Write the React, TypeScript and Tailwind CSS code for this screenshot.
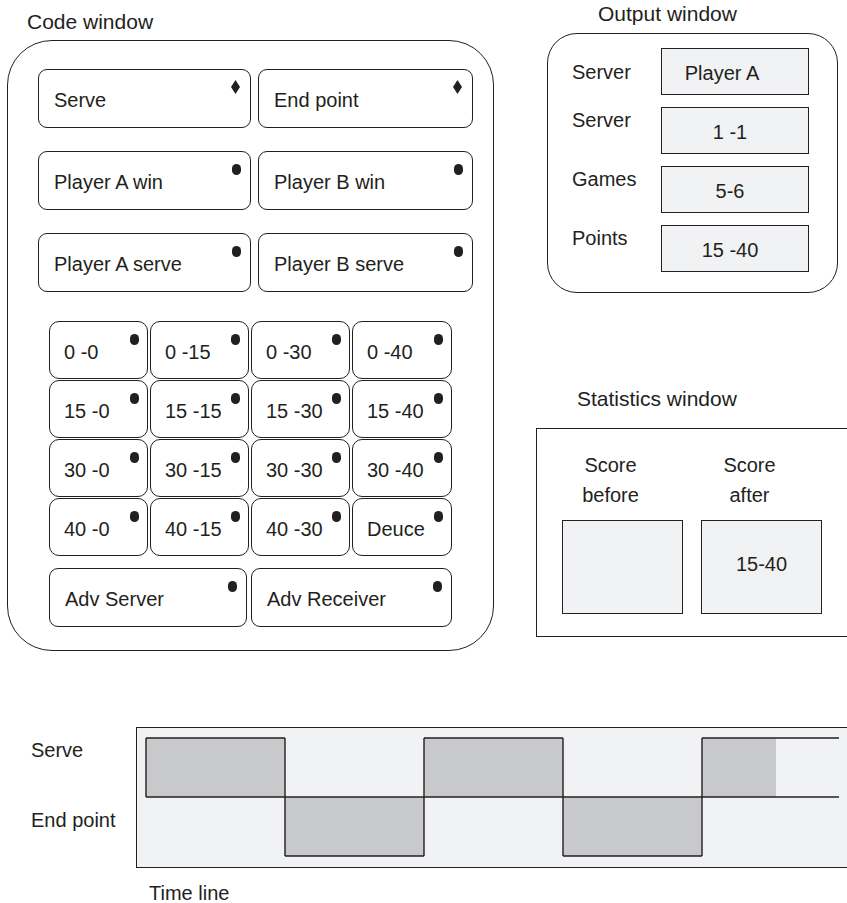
import React from "react"

const ink = "text-[#231f20]"

function Marker({ kind }: { kind: "diamond" | "dot" }) {
  if (kind === "diamond") {
    return (
      <svg className="absolute top-[10px] right-[10px]" width="9" height="14" viewBox="0 0 9 14">
        <polygon points="4.5,0 9,7 4.5,14 0,7" fill="#231f20" />
      </svg>
    )
  }
  return <span className="absolute top-[12px] right-[9px] w-[9px] h-[11px] rounded-full bg-[#231f20]" />
}

function CodeButton({ label, kind, className }: { label: string; kind: "diamond" | "dot"; className: string }) {
  return (
    <div className={`relative flex items-center pl-[15px] pt-[2px] border border-[#231f20] rounded-[9px] bg-white text-[20px] leading-none ${className}`}>
      {label}
      <Marker kind={kind} />
    </div>
  )
}

export default function App() {
  const bigRows = [
    { a: "Serve", b: "End point", kind: "diamond" as const },
    { a: "Player A win", b: "Player B win", kind: "dot" as const },
    { a: "Player A serve", b: "Player B serve", kind: "dot" as const },
  ]

  const scores = [
    "0 -0", "0 -15", "0 -30", "0 -40",
    "15 -0", "15 -15", "15 -30", "15 -40",
    "30 -0", "30 -15", "30 -30", "30 -40",
    "40 -0", "40 -15", "40 -30", "Deuce",
  ]

  const output = [
    { label: "Server", value: "Player A", first: true, pad: "pr-[26px]" },
    { label: "Server", value: "1 -1", first: false, pad: "pr-[10px]" },
    { label: "Games", value: "5-6", first: false, pad: "pr-[10px]" },
    { label: "Points", value: "15 -40", first: false, pad: "pr-[10px]" },
  ]

  return (
    <div className={`w-[847px] h-[903px] overflow-hidden bg-white ${ink} font-['Liberation_Sans',Arial,sans-serif]`}>
      {/* top part */}
      <div className="flex items-start">
        {/* code window */}
        <div className="pl-[7px] pt-[11px] w-[494px] shrink-0">
          <div className="pl-[20px] text-[21px] leading-none h-[21px] mb-[8px]">Code window</div>
          <div className="border border-[#231f20] rounded-[45px] h-[611px] pl-[30px] pt-[28px]">
            <div className="flex flex-col gap-[23px]">
              {bigRows.map((row) => (
                <div key={row.a} className="flex gap-[7px]">
                  <CodeButton label={row.a} kind={row.kind} className="w-[213px] h-[59px]" />
                  <CodeButton label={row.b} kind={row.kind} className="w-[215px] h-[59px]" />
                </div>
              ))}
            </div>

            <div className="ml-[11px] mt-[29px] grid grid-cols-[99px_99px_99px_100px] gap-x-[2px] gap-y-[1px]">
              {scores.map((s) => (
                <div
                  key={s}
                  className="relative h-[58px] flex items-center pl-[14px] pt-[4px] border border-[#231f20] rounded-[10px] text-[20px] leading-none"
                >
                  {s}
                  <span className="absolute top-[12px] right-[8px] w-[9px] h-[11px] rounded-full bg-[#231f20]" />
                </div>
              ))}
            </div>

            <div className="ml-[11px] mt-[12px] flex gap-[4px]">
              <CodeButton label="Adv Server" kind="dot" className="w-[198px] h-[59px]" />
              <CodeButton label="Adv Receiver" kind="dot" className="w-[201px] h-[59px]" />
            </div>
          </div>
        </div>

        {/* right column */}
        <div className="ml-[42px] pt-[3px] flex-1">
          <div className="ml-[62px] text-[21px] leading-none h-[21px] mb-[9px]">Output window</div>
          <div className="ml-[11px] w-[291px] h-[260px] border border-[#231f20] rounded-[30px] pl-[24px] pt-[14px] flex flex-col gap-[12px]">
            {output.map((row, i) => (
              <div key={i} className="flex items-start">
                <div className={`w-[89px] text-[20px] leading-none ${row.first ? "mt-[14px]" : "mt-[3px]"}`}>{row.label}</div>
                <div className={`w-[148px] h-[47px] border border-[#231f20] bg-[#f1f2f3] flex items-center justify-center pt-[2px] text-[20px] leading-none ${row.pad}`}>
                  {row.value}
                </div>
              </div>
            ))}
          </div>

          <div className="mt-[95px] ml-[41px] text-[21px] leading-none h-[21px] mb-[19px]">Statistics window</div>
          <div className="h-[209px] border border-r-0 border-[#231f20] pl-[25px] pt-[21px] flex gap-[18px]">
            {[
              { top: "Score", bottom: "before", value: "" },
              { top: "Score", bottom: "after", value: "15-40" },
            ].map((col) => (
              <div key={col.bottom} className="w-[121px]">
                <div className="pr-[24px] text-center text-[20px] leading-[30px]">
                  <div>{col.top}</div>
                  <div>{col.bottom}</div>
                </div>
                <div className="mt-[10px] h-[94px] border border-[#231f20] bg-[#f1f2f3] flex items-center justify-center pb-[6px] text-[20px] leading-none">
                  {col.value}
                </div>
              </div>
            ))}
          </div>
        </div>
      </div>

      {/* time line */}
      <div className="mt-[76px] flex items-start">
        <div className="w-[136px] pl-[31px] pt-[13px] text-[20px] leading-none">
          <div>Serve</div>
          <div className="mt-[50px]">End point</div>
        </div>
        <div className="relative w-[711px] h-[141px] border border-r-0 border-[#231f20] bg-[#f1f2f4]">
          <svg className="absolute top-0 left-0" width="710" height="139" viewBox="0 0 710 139">
            <g fill="#c8c9cb">
              <rect x="9" y="10" width="139" height="59" />
              <rect x="148" y="69" width="139" height="59" />
              <rect x="287" y="10" width="139" height="59" />
              <rect x="426" y="69" width="139" height="59" />
              <rect x="565" y="10" width="74" height="59" />
            </g>
            <g stroke="#231f20" strokeWidth="1.4" fill="none">
              <path d="M9 69 H702" />
              <path d="M9 10 H148 M287 10 H426 M565 10 H702" />
              <path d="M148 128 H287 M426 128 H565" />
              <path d="M9 10 V69 M148 10 V128 M287 10 V128 M426 10 V128 M565 10 V128" />
            </g>
          </svg>
        </div>
      </div>
      <div className="ml-[149px] mt-[15px] text-[20px] leading-none">Time line</div>
    </div>
  )
}
